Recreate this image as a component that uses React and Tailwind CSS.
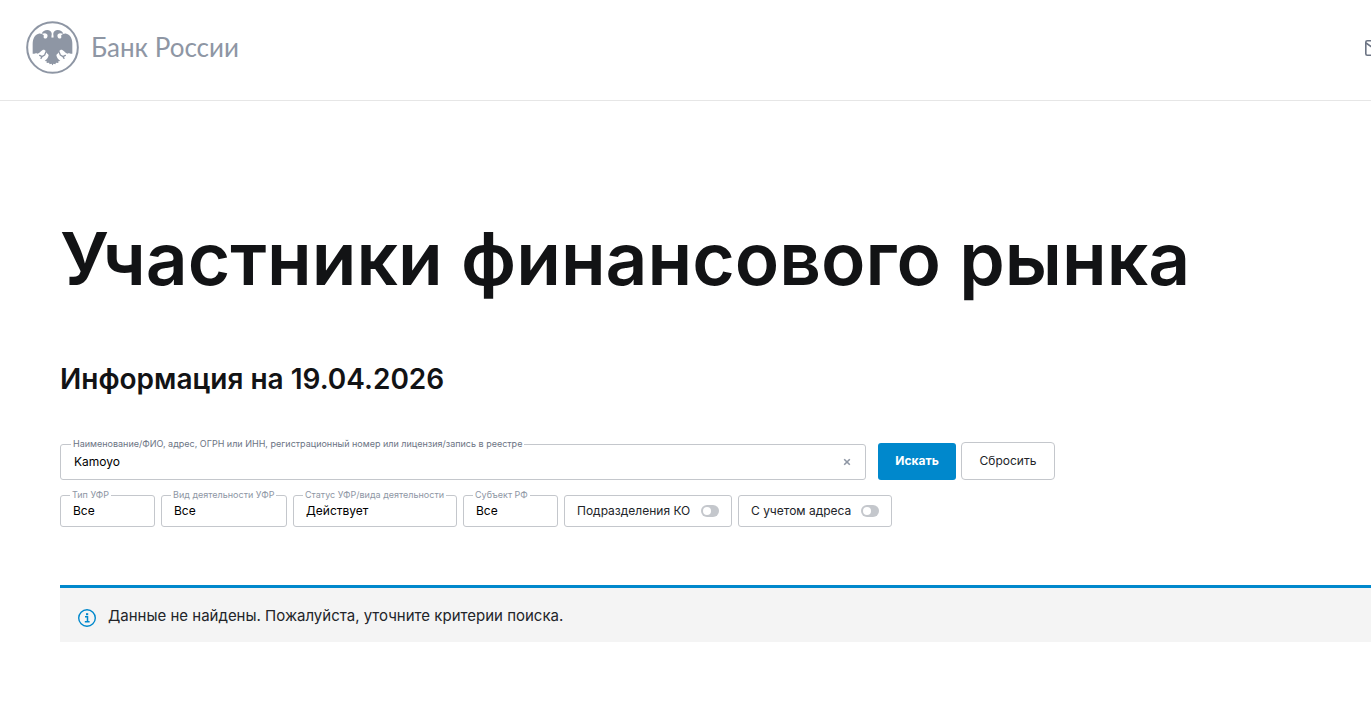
import { useState } from "react";

function Emblem() {
  return (
    <svg viewBox="0 0 159 159" className="size-[53px] shrink-0 text-[#8e96a4]" aria-hidden="true">
      <circle cx="79.500" cy="79.500" r="76" fill="#fff" stroke="currentColor" strokeWidth="6" />
      <g fill="currentColor">
        <path id="eagle-half" d="M81 50H77C75 45 78 42 77 37C76 31 71 27 64 27C56 27 50 31 47 38L57 37C64 38 66 43 64 48C62 53 57 54 54 51C52 48 53 46 54 44C50 39 44 37 38 38C26 40 20 54 20 68V98C27 99 31 94 34 98C39 98 43 92 49 88C53 85 57 87 59 91C61 97 66 99 68 102C67 110 62 116 56 120L62 121L62 126L69 125L71 130L76 128L81 133Z" />
        <use href="#eagle-half" transform="translate(159 0) scale(-1 1)" />
      </g>
      <g fill="none" stroke="currentColor" strokeWidth="4" strokeLinecap="round" strokeLinejoin="round">
        <path d="M60 92L56 102L48 107L41 103M48 107L45 112M99 92L103 102L111 107L118 103M111 107L114 112" />
      </g>
    </svg>
  );
}

function InfoIcon() {
  return (
    <svg viewBox="0 0 18 18" className="mt-[5px] size-[18px] shrink-0" fill="none" stroke="#0088cc" aria-hidden="true">
      <circle cx="9" cy="9" r="8.300" strokeWidth="1.400" />
      <path d="M7 7.800H9.500V12.500M6.800 12.800H11.600" strokeWidth="1.500" />
      <path d="M8 5.200H10.200" strokeWidth="2" />
    </svg>
  );
}

function MailIcon() {
  return (
    <svg viewBox="0 0 20 16" className="h-4 w-5" fill="none" stroke="#6c7484" strokeWidth="1.600" aria-hidden="true">
      <rect x="0.800" y="0.800" width="18.400" height="14.400" rx="1.500" />
      <path d="M1 3L10 9.500L19 3" />
    </svg>
  );
}

function FilterSelect({ id, label, value, className }) {
  return (
    <fieldset className={`h-10 rounded-[3px] border border-[#c4c7cc] pl-[9px] ${className}`}>
      <legend className="h-4 px-[2px] text-[9px] leading-4 whitespace-nowrap text-[#8e96a4]">
        <label htmlFor={id}>{label}</label>
      </legend>
      <select id={id} className="block h-4 w-full appearance-none bg-transparent pl-[3px] text-xs leading-4 text-black outline-none">
        <option>{value}</option>
      </select>
    </fieldset>
  );
}

function ToggleFilter({ label, className }) {
  const [on, setOn] = useState(false);
  return (
    <label className={`mt-2 flex h-8 cursor-pointer items-center justify-between rounded-[3px] border border-[#c4c7cc] px-3 text-xs whitespace-nowrap text-[#222429] ${className}`}>
      {label}
      <input
        type="checkbox"
        role="switch"
        checked={on}
        onChange={() => setOn(!on)}
        className="flex h-3 w-[18px] cursor-pointer appearance-none items-center rounded-full bg-[#c4c7cc] px-[2px] before:size-2 before:rounded-full before:bg-white checked:justify-end checked:bg-[#0088cc]"
      />
    </label>
  );
}

export default function App() {
  const [query, setQuery] = useState("Kamoyo");
  return (
    <div className="min-h-screen overflow-x-hidden bg-white font-['Inter','Liberation_Sans',sans-serif] text-[#121315]">
      <header className="flex h-[101px] items-start justify-between border-b border-[#e6e6e6] pl-[26px]">
        <a href="#" className="mt-[21px] flex items-center gap-3 font-['Lato',sans-serif] text-[26px] leading-[53px] text-[#8e96a4]">
          <Emblem />
          Банк России
        </a>
        <a href="#" aria-label="Написать" className="mt-10 -mr-[14px] block">
          <MailIcon />
        </a>
      </header>

      <main className="pl-[60px]">
        <h1 className="mt-[114px] text-[73px] leading-[88px] font-semibold whitespace-nowrap">Участники финансового рынка</h1>
        <h2 className="mt-[58px] text-[28px] leading-9 font-semibold">Информация на 19.04.2026</h2>

        <form onSubmit={(e) => e.preventDefault()} className="mt-[39px]">
          <div className="flex items-end">
            <fieldset className="flex h-[44px] w-[806px] rounded-[3px] border border-[#c4c7cc] pl-[10px]">
              <legend className="h-4 px-[2px] text-[9px] leading-4 whitespace-nowrap text-[#6c7484]">
                <label htmlFor="query">Наименование/ФИО, адрес, ОГРН или ИНН, регистрационный номер или лицензия/запись в реестре</label>
              </legend>
              <input
                id="query"
                value={query}
                onChange={(e) => setQuery(e.target.value)}
                className="block h-[18px] min-w-0 flex-1 bg-transparent pl-[3px] text-xs text-black outline-none"
              />
              <button type="button" aria-label="Очистить" onClick={() => setQuery("")} className="mr-[14px] flex h-5 items-center">
                <svg viewBox="0 0 8 8" className="size-2" fill="none" stroke="#8e96a4" strokeWidth="1.600" aria-hidden="true">
                  <path d="M1.200 1.200L6.800 6.800M6.800 1.200L1.200 6.800" />
                </svg>
              </button>
            </fieldset>
            <button type="submit" className="ml-3 h-[37px] w-[78px] rounded-[3px] bg-[#0088cc] pb-[2px] text-xs font-bold text-white">Искать</button>
            <button type="reset" onClick={() => setQuery("")} className="ml-[5px] h-[38px] w-[94px] rounded-[4px] border border-[#c4c7cc] text-xs text-[#222429]">Сбросить</button>
          </div>
          <div className="mt-[7px] flex gap-[6px]">
            <FilterSelect id="type" label="Тип УФР" value="Все" className="w-[95px]" />
            <FilterSelect id="activity" label="Вид деятельности УФР" value="Все" className="w-[126px]" />
            <FilterSelect id="status" label="Статус УФР/вида деятельности" value="Действует" className="w-[164px]" />
            <FilterSelect id="region" label="Субъект РФ" value="Все" className="w-[95px]" />
            <ToggleFilter label="Подразделения КО" className="w-[168px]" />
            <ToggleFilter label="С учетом адреса" className="w-[154px]" />
          </div>
        </form>

        <div role="status" className="mt-[58px] flex h-[57px] gap-3 border-t-3 border-[#0088cc] bg-[#f4f4f4] pt-4 pl-[18px] text-[15px] leading-6 text-[#222429]">
          <InfoIcon />
          <p>Данные не найдены. Пожалуйста, уточните критерии поиска.</p>
        </div>
      </main>
    </div>
  );
}
